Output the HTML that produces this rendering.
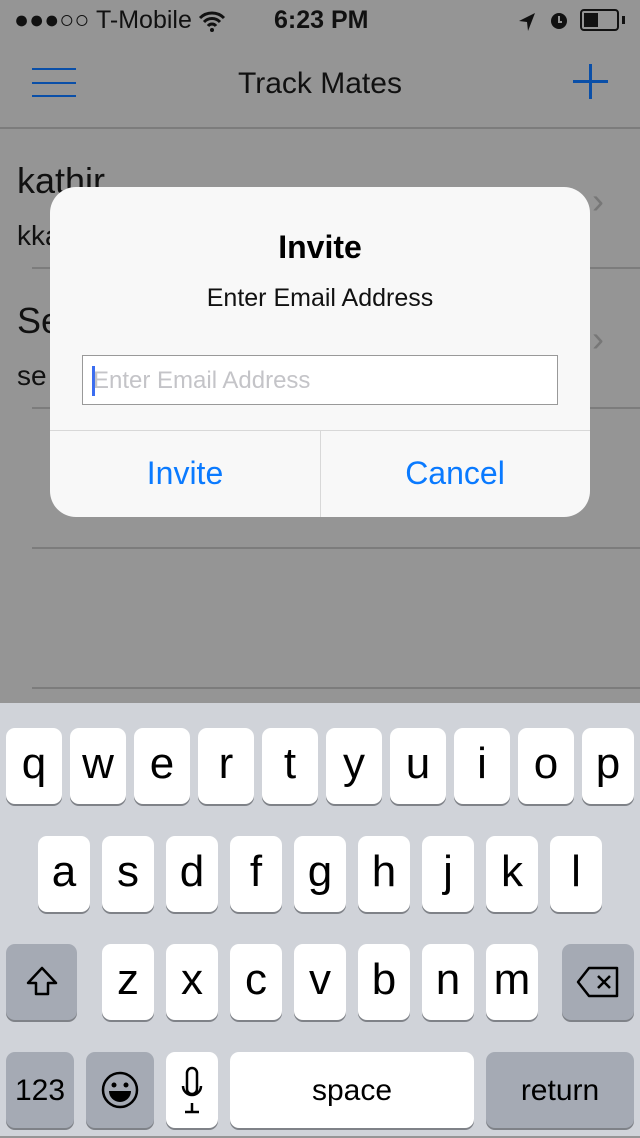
<!DOCTYPE html>
<html><head><style>
body{margin:0;width:640px;height:1136px;overflow:hidden;background:#959595;font-family:"Liberation Sans",sans-serif;position:relative}
.a{position:absolute}
.k{position:absolute;background:#fff;border-radius:9px;box-shadow:0 2px 0 #7f8288;text-align:center;font-size:44px;color:#000;height:76px;line-height:72px}
.g{background:#a5aab4}
.sep{position:absolute;left:32px;right:0;height:2px;background:#7c7c7c}
</style></head><body>
<div class="a" style="left:14px;top:6px;font-size:25px;color:#111">●●●○○ T-Mobile</div>
<svg class="a" style="left:198px;top:10px" width="28" height="22" viewBox="0 0 28 22"><path d="M2 8a17 17 0 0 1 24 0M6 12a11 11 0 0 1 16 0M10 16a5 5 0 0 1 8 0" stroke="#111" stroke-width="3" fill="none"/><circle cx="14" cy="20" r="2" fill="#111"/></svg>
<div class="a" style="left:274px;top:6px;font-size:25px;font-weight:bold;color:#111">6:23 PM</div>
<svg class="a" style="left:518px;top:12px" width="18" height="20"><path d="M17 1L1 9l8 1 1 9z" fill="#111"/></svg>
<svg class="a" style="left:548px;top:9px" width="22" height="22"><circle cx="11" cy="12" r="8" fill="#111"/><path d="M11 7v6h3" stroke="#959595" stroke-width="2" fill="none"/></svg>
<div class="a" style="left:580px;top:9px;width:39px;height:22px;border:2px solid #111;border-radius:4px;box-sizing:border-box"><div style="position:absolute;left:2px;top:2px;width:14px;height:14px;background:#111"></div></div>
<div class="a" style="left:622px;top:16px;width:3px;height:8px;background:#111"></div>
<div class="a" style="left:32px;top:82px;width:44px;height:2px;background:#0a4fa8;box-shadow:0 -14px 0 #0a4fa8,0 13px 0 #0a4fa8"></div>
<div class="a" style="left:0;right:0;top:67px;text-align:center;font-size:30px;color:#111">Track Mates</div>
<div class="a" style="left:573px;top:80px;width:35px;height:3px;background:#0a4fa8"></div>
<div class="a" style="left:589px;top:64px;width:3px;height:35px;background:#0a4fa8"></div>
<div class="a" style="left:0;right:0;top:127px;height:2px;background:#7c7c7c"></div>
<div class="a" style="left:17px;top:160px;font-size:36px;color:#111">kathir</div>
<div class="a" style="left:17px;top:220px;font-size:28px;color:#111">kka</div>
<div class="a" style="left:17px;top:300px;font-size:36px;color:#111">Se</div>
<div class="a" style="left:17px;top:360px;font-size:28px;color:#111">se</div>
<div class="a" style="left:592px;top:180px;font-size:36px;color:#777">›</div>
<div class="a" style="left:592px;top:318px;font-size:36px;color:#777">›</div>
<div class="sep" style="top:267px"></div><div class="sep" style="top:407px"></div><div class="sep" style="top:547px"></div><div class="sep" style="top:687px"></div>
<div class="a" style="left:50px;top:187px;width:540px;height:330px;background:#f8f8f8;border-radius:26px;overflow:hidden">
<div class="a" style="left:0;right:0;top:42px;text-align:center;font-size:32px;font-weight:bold;color:#000">Invite</div>
<div class="a" style="left:0;right:0;top:97px;text-align:center;font-size:25px;color:#111">Enter Email Address</div>
<div class="a" style="left:32px;top:168px;width:476px;height:50px;border:1px solid #999;background:#fff;box-sizing:border-box"><div style="position:absolute;left:9px;top:10px;width:3px;height:30px;background:#3b6df0"></div><div style="position:absolute;left:10px;top:11px;font-size:24px;color:#c4c4c8">Enter Email Address</div></div>
<div class="a" style="left:0;right:0;top:243px;height:1px;background:#d8d8d8"></div>
<div class="a" style="left:270px;top:243px;width:1px;height:90px;background:#d8d8d8"></div>
<div class="a" style="left:0;width:270px;top:268px;text-align:center;font-size:32px;color:#0a7aff">Invite</div>
<div class="a" style="left:270px;width:270px;top:268px;text-align:center;font-size:32px;color:#0a7aff">Cancel</div>
</div>
<div class="a" style="left:0;top:703px;width:640px;height:433px;background:#d0d3d9"></div>
<div class="k" style="left:6px;top:728px;width:56px">q</div><div class="k" style="left:70px;top:728px;width:56px">w</div><div class="k" style="left:134px;top:728px;width:56px">e</div><div class="k" style="left:198px;top:728px;width:56px">r</div><div class="k" style="left:262px;top:728px;width:56px">t</div><div class="k" style="left:326px;top:728px;width:56px">y</div><div class="k" style="left:390px;top:728px;width:56px">u</div><div class="k" style="left:454px;top:728px;width:56px">i</div><div class="k" style="left:518px;top:728px;width:56px">o</div><div class="k" style="left:582px;top:728px;width:52px">p</div>
<div class="k" style="left:38px;top:836px;width:52px">a</div><div class="k" style="left:102px;top:836px;width:52px">s</div><div class="k" style="left:166px;top:836px;width:52px">d</div><div class="k" style="left:230px;top:836px;width:52px">f</div><div class="k" style="left:294px;top:836px;width:52px">g</div><div class="k" style="left:358px;top:836px;width:52px">h</div><div class="k" style="left:422px;top:836px;width:52px">j</div><div class="k" style="left:486px;top:836px;width:52px">k</div><div class="k" style="left:550px;top:836px;width:52px">l</div>
<div class="k g" style="left:6px;top:944px;width:71px"><svg width="40" height="40" style="margin-top:18px" viewBox="0 0 40 40"><path d="M20 6L6 21h8v11h12V21h8z" fill="none" stroke="#000" stroke-width="2.5" stroke-linejoin="round"/></svg></div>
<div class="k" style="left:102px;top:944px;width:52px">z</div><div class="k" style="left:166px;top:944px;width:52px">x</div><div class="k" style="left:230px;top:944px;width:52px">c</div><div class="k" style="left:294px;top:944px;width:52px">v</div><div class="k" style="left:358px;top:944px;width:52px">b</div><div class="k" style="left:422px;top:944px;width:52px">n</div><div class="k" style="left:486px;top:944px;width:52px">m</div>
<div class="k g" style="left:562px;top:944px;width:72px"><svg width="46" height="36" style="margin-top:20px" viewBox="0 0 46 36"><path d="M14 4h28v28H14L3 18z" fill="none" stroke="#000" stroke-width="2.5" stroke-linejoin="round"/><path d="M23 12l12 12M35 12L23 24" stroke="#000" stroke-width="2.5"/></svg></div>
<div class="k g" style="left:6px;top:1052px;width:68px;font-size:30px;line-height:78px">123</div>
<div class="k g" style="left:86px;top:1052px;width:68px"><svg width="40" height="40" style="margin-top:18px" viewBox="0 0 40 40"><circle cx="20" cy="20" r="17" fill="none" stroke="#000" stroke-width="2.5"/><circle cx="14" cy="15" r="2.5"/><circle cx="26" cy="15" r="2.5"/><path d="M9 21h22a11 11 0 0 1-22 0z"/></svg></div>
<div class="k" style="left:166px;top:1052px;width:52px"><svg width="24" height="50" style="margin-top:14px" viewBox="0 0 24 50"><rect x="7" y="2" width="10" height="26" rx="5" fill="none" stroke="#000" stroke-width="2.5"/><path d="M3 20a9 9 0 0 0 18 0M12 37v8M5 46h14" fill="none" stroke="#000" stroke-width="2.5"/></svg></div>
<div class="k" style="left:230px;top:1052px;width:244px;font-size:30px;line-height:78px">space</div>
<div class="k g" style="left:486px;top:1052px;width:148px;font-size:30px;line-height:78px">return</div>
</body></html>
